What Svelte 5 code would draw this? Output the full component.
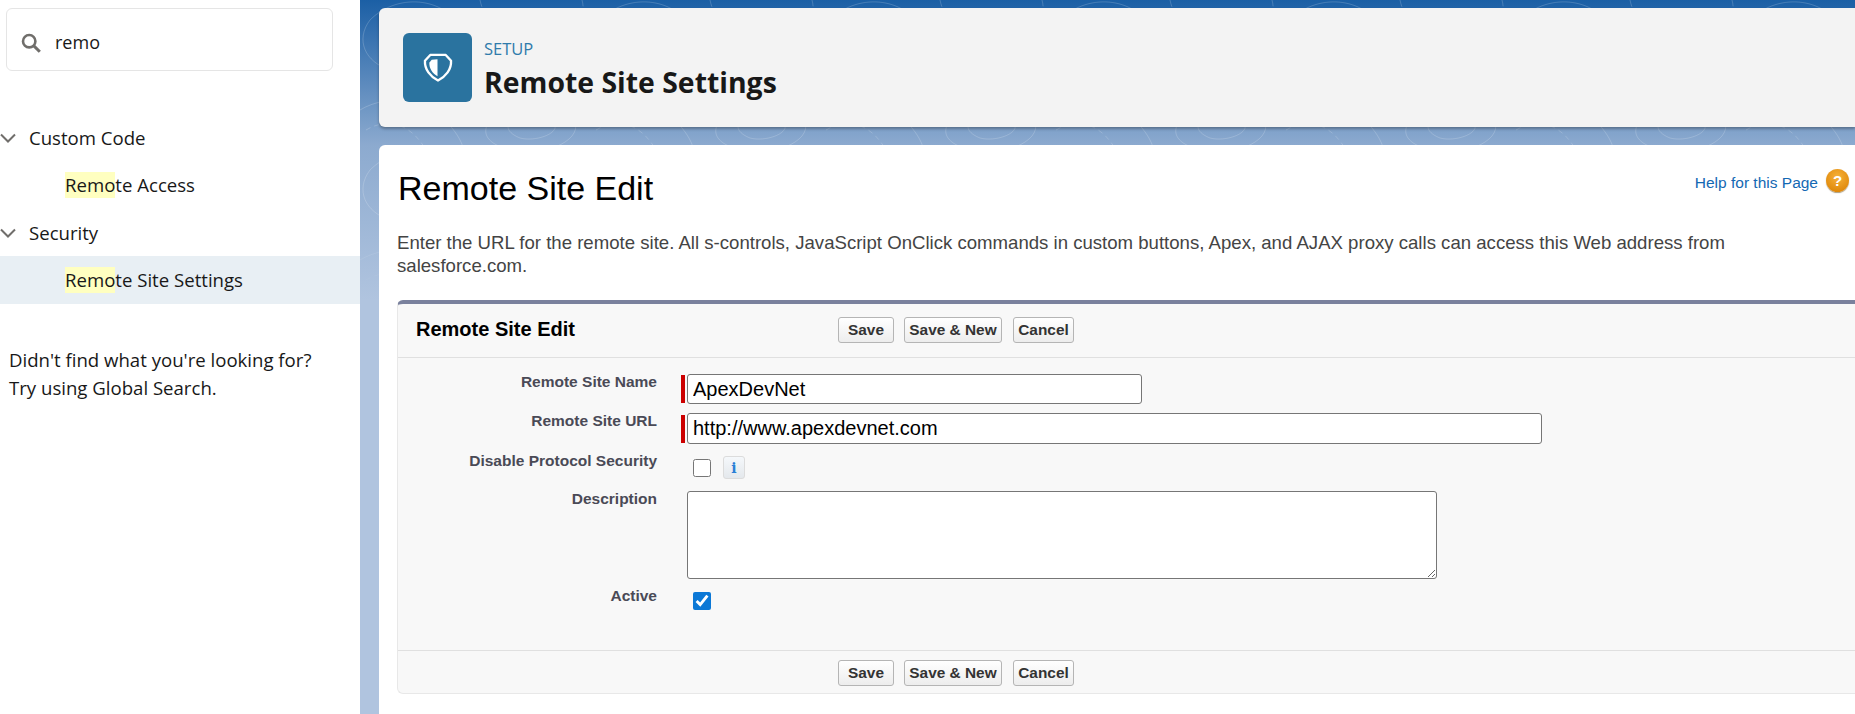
<script lang="ts">
	const tree = [
		{ name: 'Custom Code', items: [{ label: 'Remote Access', rest: 'te Access', selected: false }] },
		{ name: 'Security', items: [{ label: 'Remote Site Settings', rest: 'te Site Settings', selected: true }] }
	];
</script>

<div class="page">
	<aside class="sidebar">
		<div class="search">
			<svg class="search-icon" viewBox="0 0 20 20" width="20" height="20" aria-hidden="true">
				<circle cx="8.2" cy="8.2" r="6.2" fill="none" stroke="#706e6b" stroke-width="2.6"></circle>
				<path d="M12.6 12.6 L18.8 18.8" stroke="#706e6b" stroke-width="3" fill="none"></path>
			</svg>
			<span class="search-text">remo</span>
		</div>

		<nav class="tree">
			{#each tree as group}
				<div class="group">
					<svg class="chevron" viewBox="0 0 16 10" width="16" height="10" aria-hidden="true">
						<path d="M1 1.5 L8 8.5 L15 1.5" fill="none" stroke="#706e6b" stroke-width="2"></path>
					</svg>
					{group.name}
				</div>
				{#each group.items as item}
					<div class="item" class:selected={item.selected}><mark>Remo</mark>{item.rest}</div>
				{/each}
			{/each}
		</nav>

		<p class="hint">Didn't find what you're looking for?<br />Try using Global Search.</p>
	</aside>

	<main class="main">
		<svg class="topo" width="100%" height="300" aria-hidden="true">
			<defs>
				<linearGradient id="fade" x1="0" y1="0" x2="0" y2="1">
					<stop offset="0.7" stop-color="#fff"></stop>
					<stop offset="1" stop-color="#000"></stop>
				</linearGradient>
				<mask id="fade-mask">
					<rect width="100%" height="100%" fill="url(#fade)"></rect>
				</mask>
				<pattern id="contours" width="230" height="150" patternUnits="userSpaceOnUse">
					<g fill="none" stroke="#fff" stroke-opacity="0.18" stroke-width="1">
						<path d="M10 20 C40 -10 90 0 100 30 C110 60 60 80 30 70 C5 62 -5 40 10 20 Z"></path>
						<path d="M25 30 C45 12 75 16 82 34 C88 52 58 62 40 56 C24 50 16 42 25 30 Z"></path>
						<path d="M130 120 C150 95 205 98 215 122 C222 142 180 158 150 150 C128 144 120 134 130 120 Z"></path>
						<path d="M150 122 C165 110 190 112 195 125 C198 134 175 142 160 138 C150 134 145 128 150 122 Z"></path>
						<path d="M120 0 C126 30 160 50 200 40 C220 34 226 14 222 0" stroke-dasharray="7 5"></path>
						<path d="M0 110 C30 92 70 100 92 128 C100 138 102 144 104 150"></path>
						<path d="M6 130 C26 118 50 122 66 150" stroke-dasharray="5 4"></path>
					</g>
				</pattern>
			</defs>
			<rect width="100%" height="100%" fill="url(#contours)" mask="url(#fade-mask)"></rect>
		</svg>

		<header class="page-header">
			<div class="header-icon">
				<svg viewBox="0 0 30 30" width="30" height="29" aria-hidden="true">
					<path d="M7 2 H23 L28.5 8 C29 17 23 24.5 15 28.5 C7 24.5 1 17 1.5 8 Z" fill="none" stroke="#fff" stroke-width="2.4" stroke-linejoin="round"></path>
					<path d="M14.5 6.5 L8.5 7 L6 10 C6 16 9 21 14.5 24 Z" fill="#fff"></path>
				</svg>
			</div>
			<div class="header-text">
				<div class="eyebrow">SETUP</div>
				<h1>Remote Site Settings</h1>
			</div>
		</header>

		<section class="content">
			<div class="title-row">
				<h2>Remote Site Edit</h2>
				<a class="help" href="#help">
					Help for this Page
					<span class="help-icon">?</span>
				</a>
			</div>
			<p class="intro">
				Enter the URL for the remote site. All s-controls, JavaScript OnClick commands in custom buttons, Apex, and AJAX proxy calls can access this Web address from salesforce.com.
			</p>

			<div class="panel">
				<div class="panel-head">
					<h3>Remote Site Edit</h3>
					<div class="buttons">
						<button>Save</button>
						<button>Save &amp; New</button>
						<button>Cancel</button>
					</div>
				</div>

				<div class="panel-body">
					<div class="row">
						<div class="label">Remote Site Name</div>
						<div class="field required"><i></i><input class="name" value="ApexDevNet" readonly /></div>
					</div>
					<div class="row">
						<div class="label">Remote Site URL</div>
						<div class="field required"><i></i><input class="url" value="http://www.apexdevnet.com" readonly /></div>
					</div>
					<div class="row check-row">
						<div class="label">Disable Protocol Security</div>
						<div class="field">
							<input type="checkbox" />
							<span class="info">i</span>
						</div>
					</div>
					<div class="row">
						<div class="label">Description</div>
						<div class="field"><textarea></textarea></div>
					</div>
					<div class="row check-row">
						<div class="label">Active</div>
						<div class="field"><input type="checkbox" checked /></div>
					</div>
				</div>

				<div class="panel-foot">
					<div class="buttons">
						<button>Save</button>
						<button>Save &amp; New</button>
						<button>Cancel</button>
					</div>
				</div>
			</div>
		</section>
	</main>
</div>

<style>
	:global(body) {
		margin: 0;
		overflow: hidden;
		background: #fff;
	}

	.page {
		display: grid;
		grid-template-columns: 360px 1fr;
		height: 714px;
		overflow: hidden;
	}

	.sidebar {
		background: #fff;
		font-family: 'Open Sans', 'Noto Sans', sans-serif;
		font-size: 18.6px;
		color: #181818;
	}

	.search {
		display: flex;
		align-items: center;
		gap: 14px;
		box-sizing: border-box;
		width: 327px;
		height: 63px;
		margin: 8px 0 0 6px;
		padding: 0 0 0 14px;
		border: 1px solid #e5e5e5;
		border-radius: 6px;
	}

	.search-icon {
		margin-top: 7px;
	}

	.search-text {
		margin-top: 4px;
		font-size: 18px;
	}

	.tree {
		margin-top: 42.5px;
	}

	.group {
		display: flex;
		align-items: center;
		gap: 13px;
		height: 47.5px;
	}

	.chevron {
		margin-top: 2px;
	}

	.item {
		display: flex;
		align-items: center;
		height: 47.5px;
		padding-left: 65px;
	}

	.item.selected {
		background: #e8eff4;
	}

	mark {
		display: inline-block;
		height: 26px;
		line-height: 26px;
		background: #ffffc0;
		color: inherit;
	}

	.hint {
		margin: 42px 0 0 9px;
		line-height: 28.5px;
	}

	.main {
		position: relative;
		padding: 8px 0 0 19px;
		min-width: 0;
		background: linear-gradient(180deg, #1b5fa5 0, #8caacf 145px, #b0c4df 300px);
	}

	.topo {
		position: absolute;
		inset: 0 0 auto 0;
	}

	.page-header {
		position: relative;
		display: flex;
		align-items: center;
		gap: 12px;
		box-sizing: border-box;
		height: 119px;
		padding-left: 24px;
		border-radius: 6px 0 0 6px;
		background: #f3f3f3;
		box-shadow: 0 2px 3px rgba(0, 0, 0, 0.3);
		font-family: 'Open Sans', 'Noto Sans', sans-serif;
	}

	.header-icon {
		display: flex;
		align-items: center;
		justify-content: center;
		width: 69px;
		height: 69px;
		border-radius: 6px;
		background: #2a739f;
	}

	.header-text {
		padding-top: 2px;
	}

	.eyebrow {
		font-size: 16.5px;
		line-height: 22px;
		color: #2f7bab;
	}

	h1 {
		margin: 4px 0 0;
		font-size: 28.4px;
		line-height: 36px;
		font-weight: 700;
		color: #181818;
	}

	.content {
		position: relative;
		box-sizing: border-box;
		height: 570px;
		margin-top: 18px;
		padding: 0 0 0 18px;
		border-radius: 6px 0 0 0;
		background: #fff;
		font-family: 'Liberation Sans', Arial, sans-serif;
	}

	.title-row {
		display: flex;
		justify-content: space-between;
		padding: 22px 6px 0 1px;
		height: 64px;
	}

	h2 {
		margin: 0;
		font-size: 34px;
		line-height: 42px;
		font-weight: 400;
		color: #000;
	}

	.help {
		display: flex;
		align-items: flex-start;
		gap: 8px;
		height: 24px;
		margin-top: 2px;
		font-size: 15.5px;
		line-height: 28px;
		color: #1468b3;
		text-decoration: none;
	}

	.help-icon {
		display: flex;
		align-items: center;
		justify-content: center;
		width: 23px;
		height: 23px;
		border-radius: 50%;
		background: radial-gradient(circle at 50% 35%, #f7b23a, #e08a0c 75%, #c9770a);
		box-shadow: 0 1px 1px rgba(90, 60, 0, 0.5);
		font-size: 15px;
		line-height: 23px;
		font-weight: 700;
		color: #fff;
	}

	.intro {
		width: 1340px;
		margin: 0;
		font-size: 18.6px;
		line-height: 23px;
		color: #444;
	}

	.panel {
		box-sizing: border-box;
		height: 394px;
		margin-top: 23px;
		border: 1px solid #e8e8e8;
		border-top: 4px solid #7a819d;
		border-right: 0;
		border-radius: 6px 0 0 6px;
		background: #f8f8f8;
	}

	.panel-head {
		display: flex;
		align-items: center;
		box-sizing: border-box;
		height: 54px;
		padding: 0 0 2px 18px;
		border-bottom: 1px solid #e0e0e0;
	}

	h3 {
		width: 422px;
		margin: 0;
		font-size: 20px;
		font-weight: 700;
		color: #000;
	}

	.buttons {
		display: flex;
		gap: 10px;
	}

	button {
		box-sizing: border-box;
		width: 56px;
		height: 26px;
		padding: 0;
		border: 1px solid #b5b5b5;
		border-radius: 3px;
		background: linear-gradient(180deg, #fff, #ededed);
		font-family: 'Liberation Sans', Arial, sans-serif;
		font-size: 15.4px;
		font-weight: 700;
		color: #333;
	}

	button:nth-child(2) {
		width: 98px;
	}

	button:nth-child(3) {
		width: 61px;
		margin-left: 1px;
	}

	.panel-body {
		box-sizing: border-box;
		height: 293px;
		padding-top: 16px;
		border-bottom: 1px solid #e0e0e0;
	}

	.row {
		display: grid;
		grid-template-columns: 259px 1fr;
		column-gap: 24px;
		margin-bottom: 9px;
	}

	.label {
		font-size: 15.5px;
		line-height: 16px;
		font-weight: 700;
		text-align: right;
		color: #4a4a56;
	}

	.field {
		display: flex;
		align-items: center;
		padding-left: 6px;
	}

	.field.required {
		gap: 2px;
		padding-left: 0;
	}

	.field.required i {
		width: 4px;
		height: 28px;
		background: #c00;
	}

	.check-row .field {
		gap: 12px;
		padding: 3px 0 3px 12px;
	}

	.check-row:last-child .field {
		padding-top: 4px;
	}

	input[type='checkbox'] {
		width: 18px;
		height: 18px;
		margin: 0;
		accent-color: #0b78d6;
	}

	input:not([type='checkbox']),
	textarea {
		box-sizing: border-box;
		display: block;
		margin: 0;
		border: 1px solid #767676;
		border-radius: 3px;
		background: #fff;
		font-family: 'Liberation Sans', Arial, sans-serif;
		font-size: 20px;
		color: #000;
		outline: none;
	}

	.name {
		width: 455px;
		height: 30px;
		padding: 0 5px;
	}

	.url {
		width: 855px;
		height: 31px;
		padding: 0 5px;
	}

	textarea {
		width: 750px;
		height: 88px;
	}

	.info {
		display: flex;
		align-items: center;
		justify-content: center;
		box-sizing: border-box;
		width: 22px;
		height: 23px;
		border: 1px solid #dcdcdc;
		border-radius: 3px;
		background: linear-gradient(180deg, #f5f8fb, #e4e8ec);
		font-family: 'DejaVu Serif', serif;
		font-size: 14px;
		font-weight: 700;
		color: #2a7fd6;
	}

	.panel-foot {
		padding: 9px 0 0 440px;
	}
</style>
